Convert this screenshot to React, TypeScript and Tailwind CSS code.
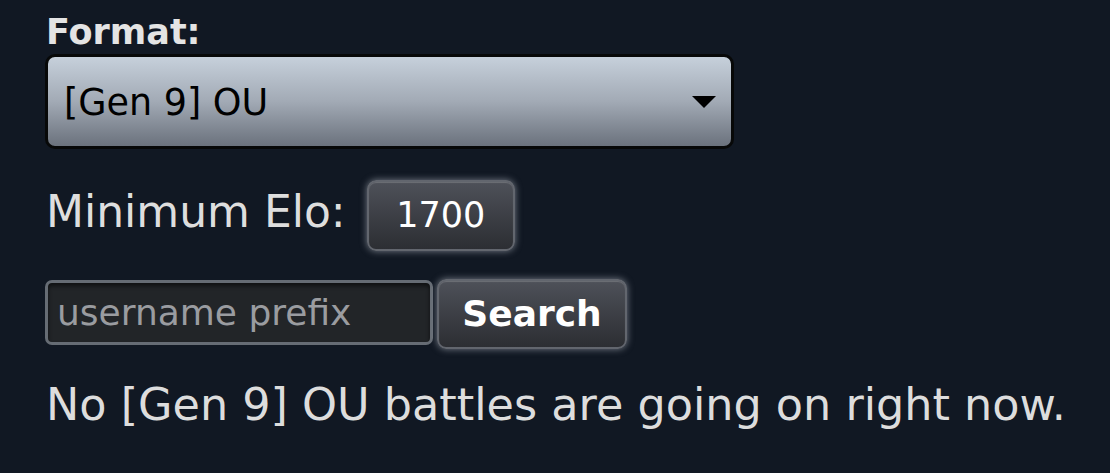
import { useState } from 'react'

const BUTTON =
  'inline-flex items-center justify-center rounded-[9px] border-2 border-[#62666e] bg-gradient-to-b from-[#4e5159] to-[#2c2e33] text-white shadow-[0_0_7px_rgba(220,225,235,0.5),inset_0_1px_1px_rgba(255,255,255,0.18)]'

export default function App() {
  const [format] = useState('[Gen 9] OU')
  const [prefix, setPrefix] = useState('')

  return (
    <div className="min-h-screen bg-[#111823] pl-[45px] pt-[12px] font-['DejaVu_Sans',Verdana,sans-serif]">
      <label className="block pl-[1px] text-[35px] font-bold leading-[41px] text-[#e4e4e4]">Format:</label>

      <button className="mt-[1px] flex h-[95px] w-[689px] items-center justify-between rounded-[10px] border-[3px] border-[#070808] bg-gradient-to-b from-[#c6d0db] via-[#a2aab5] to-[#6b727d] pl-[16px] pr-[14px] pt-[4px] text-[36.5px] text-black">
        <span>{format}</span>
        <svg width="26" height="14" viewBox="0 0 26 14" className="mb-[4px]">
          <polygon points="1,1 25,1 13,13" fill="#000" />
        </svg>
      </button>

      <div className="mt-[30px] flex items-baseline gap-[21px]">
        <span className="pl-[1px] text-[44px] text-[#dedede]">Minimum Elo:</span>
        <button className={`${BUTTON} h-[71px] w-[148px] text-[35px]`}>1700</button>
      </div>

      <div className="mt-[28px] flex items-start gap-[4px]">
        <input
          value={prefix}
          onChange={e => setPrefix(e.target.value)}
          placeholder="username prefix"
          className="mt-[1px] h-[65px] w-[388px] rounded-[7px] border-[3px] border-[#666c74] bg-[#222528] pl-[9px] text-[36px] text-white shadow-[inset_0_3px_4px_rgba(0,0,0,0.55)] outline-none placeholder:text-[#9a9ca0]"
        />
        <button className={`${BUTTON} h-[70px] w-[190px] text-[36px] font-bold`}>Search</button>
      </div>

      <p className="mt-[23px] pl-[1px] text-[44.5px] text-[#dddddd]">
        No {format} battles are going on right now.
      </p>
    </div>
  )
}
